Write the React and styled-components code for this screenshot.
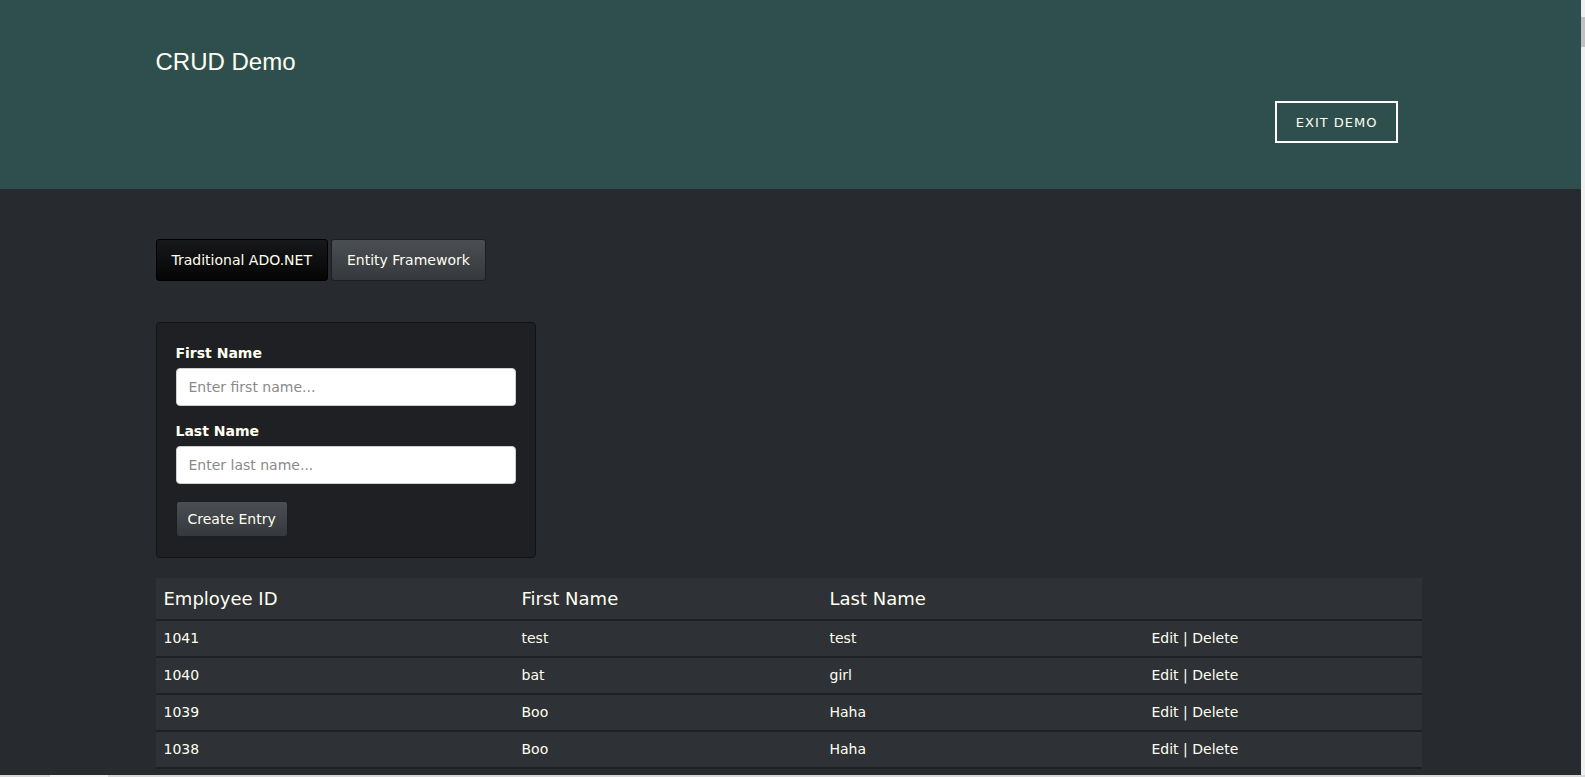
import React from "react";
import styled, { createGlobalStyle } from "styled-components";

const GlobalStyle = createGlobalStyle`
  html, body {
    margin: 0;
    padding: 0;
    background: #272a2f;
  }
  body {
    font-family: "DejaVu Sans", Verdana, sans-serif;
    color: #fffff0;
    padding-right: 8px;
    overflow: hidden;
  }
  * { box-sizing: border-box; }
`;

const ScrollTrack = styled.div`
  position: fixed;
  top: 0;
  right: 0;
  bottom: 0;
  width: 4px;
  background: #f0f0f0;
  z-index: 10;
`;

const ScrollThumb = styled.div`
  position: absolute;
  top: 17px;
  left: 0;
  width: 4px;
  height: 30px;
  background: #c2c2c2;
`;

const HScrollTrack = styled.div`
  position: fixed;
  left: 0;
  right: 0;
  bottom: 0;
  height: 2px;
  background: #d8d8d8;
  z-index: 10;
`;

const HScrollThumb = styled.div`
  position: absolute;
  left: 50px;
  top: 0;
  width: 58px;
  height: 2px;
  background: #f4f4f4;
`;

const Header = styled.header`
  background: #2f4f4f;
  padding: 48px 0 46px;
  margin-right: -8px;
  padding-right: 8px;
`;

const Container = styled.div`
  max-width: 1266px;
  margin: 0 auto;
`;

const Title = styled.h1`
  margin: 0;
  font-family: "Liberation Sans", Arial, sans-serif;
  font-weight: normal;
  font-size: 24px;
  line-height: 28px;
  color: #fffff0;
`;

const HeaderActions = styled.div`
  display: flex;
  justify-content: flex-end;
  margin-top: 25px;
  padding-right: 24px;
`;

const ExitButton = styled.button`
  height: 42px;
  padding: 0 18px 0 19px;
  border: 2px solid #ffffff;
  background: transparent;
  color: #fffff0;
  font-family: "DejaVu Sans", Verdana, sans-serif;
  font-size: 13px;
  letter-spacing: 1px;
  text-transform: uppercase;
  cursor: pointer;
`;

const Main = styled.main`
  padding: 50px 0 0;
`;

const Tabs = styled.div`
  display: flex;
  gap: 3px;
`;

const Tab = styled.button`
  padding: 10px 15px;
  line-height: 20px;
  font-family: "DejaVu Sans", Verdana, sans-serif;
  font-size: 14px;
  color: #fffff0;
  border-radius: 3px;
  cursor: pointer;
  border: 1px solid ${(p) => (p.$active ? "#000000" : "#1c1e21")};
  background: ${(p) =>
    p.$active
      ? "linear-gradient(#17181a, #050505)"
      : "linear-gradient(#4b4e53, #35383c)"};
`;

const Card = styled.section`
  width: 380px;
  margin-top: 41px;
  padding: 22px 19px 20px;
  background: #1f2024;
  border: 1px solid #121315;
  border-radius: 4px;
`;

const Form = styled.form`
  display: flex;
  flex-direction: column;
  gap: 17px;
`;

const Field = styled.div`
  display: flex;
  flex-direction: column;
  gap: 6px;
`;

const Label = styled.label`
  font-weight: bold;
  font-size: 14px;
  line-height: 17px;
  color: #fffff0;
`;

const Input = styled.input`
  height: 38px;
  padding: 9px 12px;
  font-family: "DejaVu Sans", Verdana, sans-serif;
  font-size: 14px;
  line-height: 18px;
  border: 1px solid #cfcfcf;
  border-radius: 4px;
  background: #ffffff;
  color: #222;
  &::placeholder {
    color: #8a8a8a;
  }
`;

const SubmitButton = styled.button`
  align-self: flex-start;
  height: 36px;
  padding: 0 11px;
  font-family: "DejaVu Sans", Verdana, sans-serif;
  font-size: 14px;
  color: #fffff0;
  border: 1px solid #1c1e21;
  border-radius: 3px;
  background: linear-gradient(#4b4e53, #35383c);
  cursor: pointer;
`;

const Table = styled.table`
  width: 100%;
  margin-top: 20px;
  border-collapse: collapse;
  table-layout: fixed;
  background: #2e3236;
`;

const Row = styled.tr`
  border-bottom: 2px solid #1e2023;
`;

const HeadCell = styled.th`
  text-align: left;
  font-weight: normal;
  font-size: 18px;
  line-height: 24px;
  padding: 9px 8px 8px;
  color: #fffff0;
`;

const Cell = styled.td`
  font-size: 14px;
  line-height: 20px;
  padding: 7px 8px 8px;
  color: #fffff0;
`;

const ActionLink = styled.a`
  color: #fffff0;
  text-decoration: none;
  cursor: pointer;
`;

const rows = [
  { id: 1041, first: "test", last: "test" },
  { id: 1040, first: "bat", last: "girl" },
  { id: 1039, first: "Boo", last: "Haha" },
  { id: 1038, first: "Boo", last: "Haha" },
];

export default function App() {
  return (
    <>
      <GlobalStyle />
      <ScrollTrack>
        <ScrollThumb />
      </ScrollTrack>
      <HScrollTrack>
        <HScrollThumb />
      </HScrollTrack>
      <Header>
        <Container>
          <Title>CRUD Demo</Title>
          <HeaderActions>
            <ExitButton>Exit Demo</ExitButton>
          </HeaderActions>
        </Container>
      </Header>
      <Main>
        <Container>
          <Tabs>
            <Tab $active>Traditional ADO.NET</Tab>
            <Tab>Entity Framework</Tab>
          </Tabs>
          <Card>
            <Form onSubmit={(e) => e.preventDefault()}>
              <Field>
                <Label htmlFor="first">First Name</Label>
                <Input id="first" placeholder="Enter first name..." />
              </Field>
              <Field>
                <Label htmlFor="last">Last Name</Label>
                <Input id="last" placeholder="Enter last name..." />
              </Field>
              <SubmitButton type="submit">Create Entry</SubmitButton>
            </Form>
          </Card>
          <Table>
            <colgroup>
              <col style={{ width: "358px" }} />
              <col style={{ width: "308px" }} />
              <col style={{ width: "322px" }} />
              <col />
            </colgroup>
            <thead>
              <Row>
                <HeadCell>Employee ID</HeadCell>
                <HeadCell>First Name</HeadCell>
                <HeadCell>Last Name</HeadCell>
                <HeadCell />
              </Row>
            </thead>
            <tbody>
              {rows.map((r) => (
                <Row key={r.id}>
                  <Cell>{r.id}</Cell>
                  <Cell>{r.first}</Cell>
                  <Cell>{r.last}</Cell>
                  <Cell>
                    <ActionLink>Edit</ActionLink> | <ActionLink>Delete</ActionLink>
                  </Cell>
                </Row>
              ))}
            </tbody>
          </Table>
        </Container>
      </Main>
    </>
  );
}
